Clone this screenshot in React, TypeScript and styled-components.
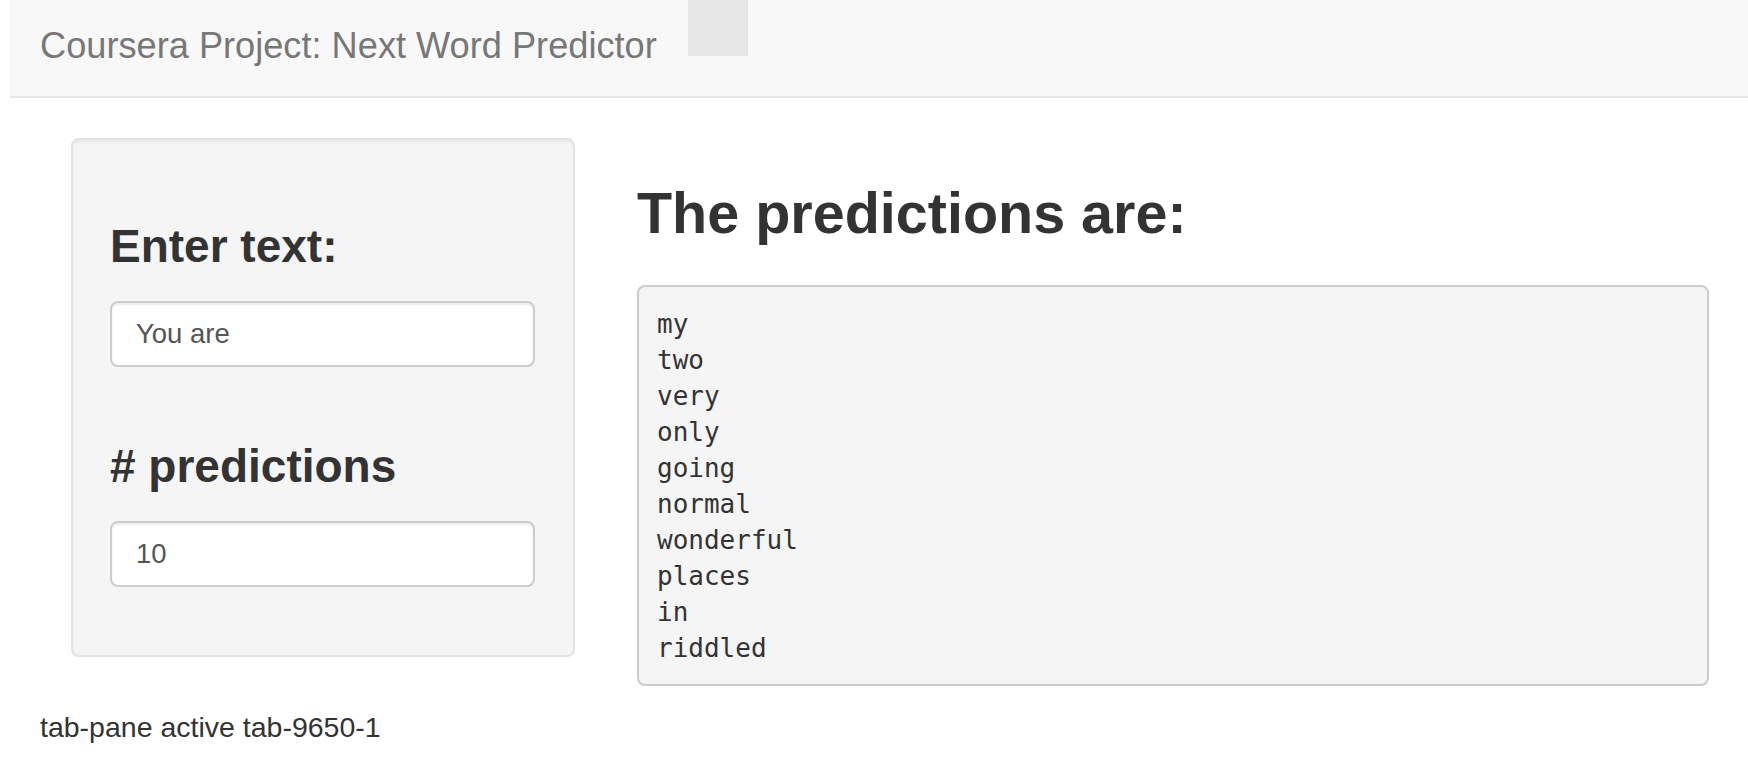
import React from "react";
import styled, { createGlobalStyle } from "styled-components";

const GlobalStyle = createGlobalStyle`
  html, body {
    margin: 0;
    padding: 0;
    background: #ffffff;
  }
  body {
    font-family: "Liberation Sans", Arial, Helvetica, sans-serif;
    color: #333333;
  }
  * { box-sizing: border-box; }
`;

const Page = styled.div`
  padding-left: 10px;
  width: 1748px;
`;

const Navbar = styled.nav`
  display: flex;
  align-items: flex-start;
  height: 98px;
  background: #f8f8f8;
  border-bottom: 2px solid #e7e7e7;
`;

const Brand = styled.div`
  flex: 0 0 678px;
  padding: 27px 0 0 30px;
  font-size: 36.2px;
  line-height: 38px;
  color: #777777;
  white-space: nowrap;
`;

const NavTab = styled.div`
  width: 60px;
  height: 56px;
  background: #e7e7e7;
`;

const Content = styled.main`
  display: flex;
  align-items: flex-start;
  padding: 40px 0 0 61px;
`;

const Well = styled.aside`
  flex: 0 0 504px;
  background: #f5f5f5;
  border: 2px solid #e3e3e3;
  border-radius: 8px;
  box-shadow: inset 0 2px 2px rgba(0, 0, 0, 0.05);
  padding: 36px 38px 36px 37px;
`;

const FieldGroup = styled.div<{ $top: number; $bottom?: number }>`
  padding-top: ${(p) => p.$top}px;
  margin-bottom: ${(p) => p.$bottom ?? 0}px;
`;

const Label = styled.h3`
  margin: 0;
  font-size: 46px;
  line-height: 51px;
  font-weight: 700;
  color: #333333;
  white-space: nowrap;
`;

const Input = styled.input`
  display: block;
  width: 425px;
  height: 66px;
  margin-top: 29px;
  padding: 0 24px;
  font-family: "Liberation Sans", Arial, sans-serif;
  font-size: 27.5px;
  color: #555555;
  background: #ffffff;
  border: 2px solid #cccccc;
  border-radius: 8px;
  box-shadow: inset 0 2px 2px rgba(0, 0, 0, 0.075);
  outline: none;
`;

const MainCol = styled.section`
  flex: 0 0 1072px;
  margin-left: 62px;
`;

const Heading = styled.h2`
  margin: 44px 0 0 0;
  font-size: 57.5px;
  line-height: 62px;
  font-weight: 700;
  color: #333333;
  white-space: nowrap;
`;

const Output = styled.pre`
  margin: 41px 0 0 0;
  padding: 19px 18px 18px 18px;
  background: #f5f5f5;
  border: 2px solid #cccccc;
  border-radius: 8px;
  font-family: "DejaVu Sans Mono", Menlo, monospace;
  font-size: 26px;
  line-height: 36px;
  color: #333333;
  white-space: pre;
`;

const Footer = styled.div`
  margin-top: 22px;
  padding-left: 30px;
  font-size: 28.5px;
  line-height: 38px;
  color: #333333;
`;

const predictions = [
  "my",
  "two",
  "very",
  "only",
  "going",
  "normal",
  "wonderful",
  "places",
  "in",
  "riddled",
];

export default function App() {
  return (
    <>
      <GlobalStyle />
      <Page>
        <Navbar>
          <Brand>Coursera Project: Next Word Predictor</Brand>
          <NavTab />
        </Navbar>
        <Content>
          <Well>
            <FieldGroup $top={45}>
              <Label>Enter text:</Label>
              <Input type="text" defaultValue="You are" />
            </FieldGroup>
            <FieldGroup $top={74} $bottom={32}>
              <Label># predictions</Label>
              <Input type="number" defaultValue="10" />
            </FieldGroup>
          </Well>
          <MainCol>
            <Heading>The predictions are:</Heading>
            <Output>{predictions.join("\n")}</Output>
          </MainCol>
        </Content>
        <Footer>tab-pane active tab-9650-1</Footer>
      </Page>
    </>
  );
}
